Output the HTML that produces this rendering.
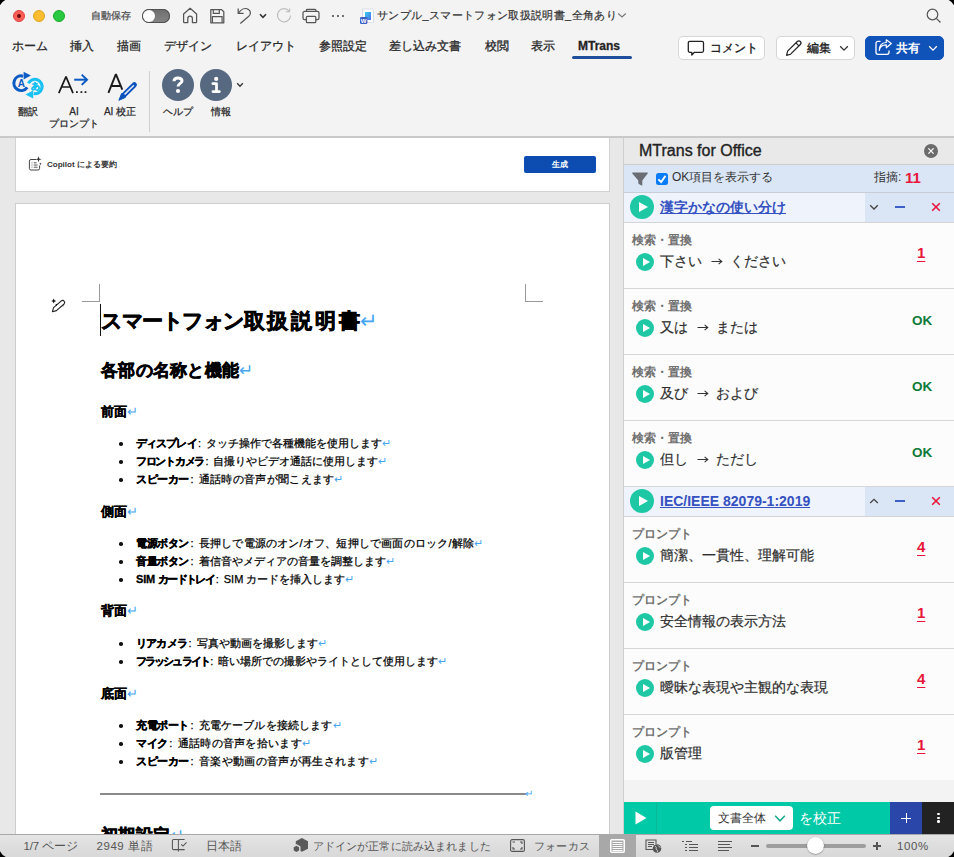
<!DOCTYPE html>
<html lang="ja"><head><meta charset="utf-8">
<style>
*{box-sizing:border-box;margin:0;padding:0}
html,body{width:954px;height:857px;overflow:hidden;background:#f3f3f3;font-family:"Liberation Sans",sans-serif;color:#222}
.a{position:absolute;white-space:nowrap}
#top{position:absolute;left:0;top:0;width:954px;height:138px;background:#f3f3f3;border-bottom:2px solid #c9c9c9;z-index:1}
.tl{position:absolute;width:12px;height:12px;border-radius:50%}
.tab{position:absolute;top:38px;font-size:12px;color:#2a2a2a;line-height:16px;-webkit-text-stroke:0.3px #2a2a2a}
.btn{position:absolute;top:36px;height:24px;border:1px solid #d6d6d6;border-radius:5px;background:#fff}
.rl{position:absolute;font-size:10px;color:#2a2a2a;line-height:12px;text-align:center;-webkit-text-stroke:0.25px #2a2a2a}
#docarea{position:absolute;left:0;top:137px;width:623px;height:697px;background:#e8e8e8;overflow:hidden}
#card{position:absolute;left:15px;top:1px;width:595px;height:54px;background:#fff;border:1px solid #d2d2d2;border-top:none}
#page{position:absolute;left:15px;top:66px;width:595px;height:700px;background:#fff;border:1px solid #cdcdcd}
.d{position:absolute;white-space:nowrap;color:#111}
.ret{color:#46a6f2;font-weight:normal;-webkit-text-stroke:0}
#panel{position:absolute;left:623px;top:137px;width:331px;height:697px;background:#f3f3f3;border-left:1px solid #cfcfcf}
#status{position:absolute;left:0;top:834px;width:954px;height:23px;background:linear-gradient(#e4e4e4,#d8d8d8);border-top:1px solid #a9a9a9}
#status .a{z-index:2}
.st{top:838px;font-size:11.5px;line-height:16px;color:#555}
.h3{font-size:12.5px;line-height:14px;font-weight:bold;color:#000;-webkit-text-stroke:0.3px #000}
.li{position:absolute;left:136px;white-space:nowrap;font-size:11px;line-height:14px;color:#000;-webkit-text-stroke:0.25px #000}
.li:before{content:"";position:absolute;left:-17px;top:6px;width:3.5px;height:3.5px;border-radius:50%;background:#111}
.li b{font-weight:bold;letter-spacing:-0.4px;-webkit-text-stroke:0.3px #000}
.li i{font-style:normal;padding:0 5px 0 1.5px}
.item{position:absolute;left:624px;width:330px;height:66px;background:#fcfcfc;border-bottom:1px solid #d6d6d6}
.cat{position:absolute;left:632px;font-size:12px;line-height:14px;color:#707070;font-weight:bold;white-space:nowrap}
.itx{position:absolute;left:660px;font-size:14px;line-height:20px;color:#2e2e2e;white-space:nowrap;-webkit-text-stroke:0.2px #2e2e2e}
.num{position:absolute;left:917px;font-size:15px;line-height:18px;color:#e8173a;font-weight:bold;text-decoration:underline;text-underline-offset:2.5px;margin-top:-1px}
.okm{position:absolute;left:912px;font-size:13.5px;line-height:16px;color:#0e7a3a;font-weight:bold;margin-top:-1px}
.ply{position:absolute;width:24px;height:24px;border-radius:50%;background:#1ec8a5}
.ply:after{content:"";position:absolute;left:9px;top:6.5px;border-left:9px solid #fff;border-top:5.5px solid transparent;border-bottom:5.5px solid transparent}
.ply.s{width:18px;height:18px}
.ply.s:after{left:6.5px;top:4.5px;border-left:7px solid #fff;border-top:4.5px solid transparent;border-bottom:4.5px solid transparent}
.lnk{font-size:14px;line-height:18px;color:#3550c0;font-weight:bold;text-decoration:underline}
</style></head><body>
<div id="top">
  <div class="tl" style="left:13px;top:10px;background:#fe5f57;border:0.5px solid #e0443e"><div style="position:absolute;left:3px;top:2.6px;width:4.2px;height:4.2px;border-radius:50%;background:#6b0a0a"></div></div>
  <div class="tl" style="left:33px;top:10px;background:#febc2e;border:0.5px solid #e1a325"></div>
  <div class="tl" style="left:53px;top:10px;background:#28c840;border:0.5px solid #1aab29"></div>
  <div class="a" style="left:91px;top:9px;font-size:10.4px;letter-spacing:0.15px;color:#555;line-height:14px;-webkit-text-stroke:0.3px #555">自動保存</div>
  <div class="a" style="left:142px;top:9px;width:28px;height:14px;border-radius:7px;background:linear-gradient(#6e6e6e,#858585);box-shadow:inset 0 0 0 1px #505050"><div style="position:absolute;left:1px;top:1px;width:12px;height:12px;border-radius:50%;background:#fff"></div></div>
  <div class="a" style="left:377px;top:8px;font-size:11px;letter-spacing:0.35px;color:#333;line-height:15px;-webkit-text-stroke:0.2px #333">サンプル_スマートフォン取扱説明書_全角あり</div>


  <svg class="a" style="left:180px;top:5px" width="20" height="20" viewBox="0 0 20 20"><path d="M3.6 17.1 V9 L10.1 3.3 L16.6 9 V17.1 Q16.6 17.5 16.2 17.5 H12.4 V13.5 A2.3 2.3 0 0 0 7.8 13.5 V17.5 H4 Q3.6 17.5 3.6 17.1 Z" fill="none" stroke="#555" stroke-width="1.25" stroke-linejoin="round"/></svg>
  <svg class="a" style="left:208px;top:7px" width="18" height="18" viewBox="0 0 18 18"><path d="M2.8 2.6 H13.6 L15.8 4.8 V15.8 H2.8 Z" fill="none" stroke="#555" stroke-width="1.25" stroke-linejoin="round"/><path d="M5.3 2.6 V6.3 H11.3 V2.6 M4.4 15.8 V9.6 H14.1 V15.8" fill="none" stroke="#555" stroke-width="1.2"/></svg>
  <svg class="a" style="left:236px;top:7px" width="18" height="18" viewBox="0 0 18 18"><path d="M2.2 1.4 V6.4 H7.6" fill="none" stroke="#555" stroke-width="1.25"/><path d="M2.4 6.2 C5 2.5 9 0.3 12.5 2.5 C15.5 4.5 14.5 8 12.5 9.6 L4.3 16.6" fill="none" stroke="#555" stroke-width="1.25"/></svg>
  <svg class="a" style="left:259px;top:13px" width="8" height="6" viewBox="0 0 8 6"><path d="M1 1.2 L4 4.3 L7 1.2" fill="none" stroke="#333" stroke-width="1.6"/></svg>
  <svg class="a" style="left:276px;top:7px" width="17" height="17" viewBox="0 0 17 17"><path d="M13.3 4.3 A6.6 6.6 0 1 0 14.6 8.5" fill="none" stroke="#bdbdbd" stroke-width="1.1"/><path d="M9.8 4.8 H13.6 V1.6" fill="none" stroke="#bdbdbd" stroke-width="1.1"/></svg>
  <svg class="a" style="left:302px;top:8px" width="18" height="16" viewBox="0 0 18 16"><path d="M4.5 3.4 V2.2 A0.9 0.9 0 0 1 5.4 1.3 H13 A0.9 0.9 0 0 1 13.9 2.2 V3.4" fill="none" stroke="#555" stroke-width="1.25"/><path d="M4.3 11.6 H2.6 A1.6 1.6 0 0 1 1 10 V5 A1.6 1.6 0 0 1 2.6 3.4 H15.4 A1.6 1.6 0 0 1 17 5 V10 A1.6 1.6 0 0 1 15.4 11.6 H13.7" fill="none" stroke="#555" stroke-width="1.25"/><rect x="4.4" y="8.3" width="9.4" height="6.4" rx="1" fill="#f3f3f3" stroke="#555" stroke-width="1.25"/></svg>
  <div class="a" style="left:331.6px;top:14.8px;width:2.4px;height:2.4px;border-radius:50%;background:#444"></div>
  <div class="a" style="left:336.9px;top:14.8px;width:2.4px;height:2.4px;border-radius:50%;background:#444"></div>
  <div class="a" style="left:341.9px;top:14.8px;width:2.4px;height:2.4px;border-radius:50%;background:#444"></div>
  <svg class="a" style="left:359px;top:8px" width="16" height="17" viewBox="0 0 16 17"><defs><linearGradient id="wg" x1="0" y1="0" x2="1" y2="1"><stop offset="0" stop-color="#35d0f5"/><stop offset="1" stop-color="#4a6fe0"/></linearGradient></defs><path d="M3.5 1 H12.5 A1.5 1.5 0 0 1 14.5 2.5 V14.5 A0.9 0.9 0 0 1 13.6 14.4 H3.5 Z" fill="#fff" stroke="#cfd6e0" stroke-width="0.8"/><rect x="6" y="4" width="6" height="8" fill="url(#wg)"/><rect x="1" y="9" width="7.4" height="7" rx="1.3" fill="#3b62c7"/><text x="4.7" y="14.6" font-size="6" font-weight="bold" fill="#fff" text-anchor="middle" font-family="Liberation Sans">W</text></svg>
  <svg class="a" style="left:617px;top:12px" width="10" height="7" viewBox="0 0 10 7"><path d="M1.2 1.5 L5 5 L8.8 1.5" fill="none" stroke="#777" stroke-width="1.1"/></svg>
  <svg class="a" style="left:925px;top:7px" width="18" height="18" viewBox="0 0 18 18"><circle cx="7.5" cy="7.5" r="5.3" fill="none" stroke="#555" stroke-width="1.2"/><path d="M11.3 11.3 L15.5 15.5" stroke="#555" stroke-width="1.2"/></svg>
  <svg class="a" style="left:0;top:0" width="7" height="7" viewBox="0 0 7 7"><path d="M0 0 H5.3 Q1.8 1.8 0 5.3 Z" fill="#000"/></svg>
  <svg class="a" style="left:947px;top:0" width="7" height="7" viewBox="0 0 7 7"><path d="M7 0 H1.7 Q5.2 1.8 7 5.3 Z" fill="#000"/></svg>

  <div class="tab" style="left:12px">ホーム</div>
  <div class="tab" style="left:70px">挿入</div>
  <div class="tab" style="left:117px">描画</div>
  <div class="tab" style="left:164px">デザイン</div>
  <div class="tab" style="left:236px">レイアウト</div>
  <div class="tab" style="left:319px">参照設定</div>
  <div class="tab" style="left:389px">差し込み文書</div>
  <div class="tab" style="left:485px">校閲</div>
  <div class="tab" style="left:531px">表示</div>
  <div class="tab" style="left:578px;font-weight:bold;color:#222">MTrans</div>
  <div class="a" style="left:572px;top:56px;width:60px;height:3px;border-radius:2px;background:#1f4e9c"></div>

  <div class="btn" style="left:678px;width:87px"><span class="a" style="left:31px;top:4px;font-size:12px;line-height:14px;color:#1a1a1a;-webkit-text-stroke:0.35px #1a1a1a">コメント</span></div>
  <div class="btn" style="left:776px;width:79px"><span class="a" style="left:30px;top:4px;font-size:12px;line-height:14px;color:#1a1a1a;-webkit-text-stroke:0.3px #1a1a1a">編集</span></div>
  <div class="btn" style="left:865px;width:79px;background:#0f52b8;border-color:#0f52b8"><span class="a" style="left:30px;top:4px;font-size:12px;line-height:14px;color:#fff;font-weight:bold">共有</span></div>


  <svg class="a" style="left:686px;top:39px" width="20" height="18" viewBox="0 0 20 18"><path d="M3.8 2.3 H16 A1.5 1.5 0 0 1 17.5 3.8 V11.8 A1.5 1.5 0 0 1 16 13.3 H8.5 L5.8 16 V13.3 H3.8 A1.5 1.5 0 0 1 2.3 11.8 V3.8 A1.5 1.5 0 0 1 3.8 2.3 Z" fill="none" stroke="#222" stroke-width="1.3" stroke-linejoin="round"/></svg>
  <svg class="a" style="left:785px;top:39px" width="18" height="18" viewBox="0 0 18 18"><path d="M1.6 16.4 L2.6 12.2 L12.3 2.5 A1.9 1.9 0 0 1 15.3 5.5 L5.6 15.2 Z M11 3.9 L13.9 6.8" fill="none" stroke="#222" stroke-width="1.2" stroke-linejoin="round"/></svg>
  <svg class="a" style="left:839px;top:45px" width="10" height="7" viewBox="0 0 10 7"><path d="M1.2 1.3 L5 5.1 L8.8 1.3" fill="none" stroke="#333" stroke-width="1.3"/></svg>
  <svg class="a" style="left:874px;top:39px" width="19" height="17" viewBox="0 0 19 17"><path d="M6.5 2.3 H4 A2 2 0 0 0 2 4.3 V13.3 A2 2 0 0 0 4 15.3 H13 A2 2 0 0 0 15 13.3 V11.5" fill="none" stroke="#fff" stroke-width="1.3"/><path d="M5.3 11.3 C5.8 7.5 8.5 5.8 12.3 5.8 V8.8 L17.3 4.5 L12.3 0.8 V3.5 C8 3.8 5.3 6.8 5.3 11.3 Z" fill="none" stroke="#fff" stroke-width="1.2" stroke-linejoin="round"/></svg>
  <svg class="a" style="left:928px;top:45px" width="10" height="7" viewBox="0 0 10 7"><path d="M1.2 1.3 L5 5.1 L8.8 1.3" fill="none" stroke="#fff" stroke-width="1.3"/></svg>

  <div class="rl" style="left:8px;top:106px;width:40px">翻訳</div>
  <div class="rl" style="left:44px;top:106px;width:60px">AI<br>プロンプト</div>
  <div class="rl" style="left:100px;top:106px;width:40px">AI 校正</div>
  <div class="a" style="left:149px;top:71px;width:1px;height:61px;background:#cfcfcf"></div>

  <svg class="a" style="left:8px;top:68px" width="42" height="34" viewBox="0 0 42 34">
    <path d="M15.09 8.15 A7.3 7.3 0 1 0 19.18 19.39" fill="none" stroke="#0a5bc4" stroke-width="3.1"/>
    <path d="M15.6 3.8 L22.9 7.6 L15.6 11.4 Z" fill="#0a5bc4"/>
    <path d="M20.37 15.46 A7.2 7.2 0 1 1 25.65 25.59" fill="none" stroke="#18c1f1" stroke-width="3.1"/>
    <path d="M25.2 22.4 L17.4 26.6 L25.2 30.6 Z" fill="#18c1f1"/>
    <text x="13.3" y="18.8" font-size="10" font-weight="bold" fill="#0a5bc4" text-anchor="middle" font-family="Liberation Sans">A</text>
    <text x="27.2" y="20.8" font-size="8.5" font-weight="bold" fill="#18c1f1" stroke="#18c1f1" stroke-width="0.5" text-anchor="middle">あ</text>
  </svg>
  <svg class="a" style="left:56px;top:72px" width="36" height="24" viewBox="0 0 36 24">
    <path d="M2.8 21.2 L10 4.6 L17 21.2 M5.4 15 H14.5" fill="none" stroke="#1a1a1a" stroke-width="1.7" stroke-linejoin="bevel"/>
    <rect x="20" y="19.2" width="1.8" height="1.8" fill="#222"/><rect x="24.5" y="19.2" width="1.8" height="1.8" fill="#222"/><rect x="28.6" y="19.2" width="1.8" height="1.8" fill="#222"/>
    <path d="M18.2 7.7 H31" fill="none" stroke="#0a5bc4" stroke-width="2"/>
    <path d="M25.7 2.6 L31 7.7 L25.7 12.9" fill="none" stroke="#0a5bc4" stroke-width="2"/>
  </svg>
  <svg class="a" style="left:104px;top:70px" width="36" height="34" viewBox="0 0 36 34">
    <path d="M4.4 22.8 L11.9 4.2 L18.3 19.6 M7.4 16 H16" fill="none" stroke="#1a1a1a" stroke-width="1.9" stroke-linejoin="bevel"/>
    <path d="M30.3 14.8 L19.6 25.3" fill="none" stroke="#0a52bd" stroke-width="5.2" stroke-linecap="round"/>
    <path d="M29.9 15.2 L20.6 24.4" fill="none" stroke="#e2e8f3" stroke-width="1.5"/>
    <path d="M17.6 23.6 L21.4 27.4 L14.9 30.3 Z" fill="#0a52bd" stroke="#0a52bd" stroke-width="1" stroke-linejoin="round"/>
  </svg>
  <svg class="a" style="left:162px;top:69px" width="32" height="32" viewBox="0 0 32 32">
    <circle cx="16" cy="16" r="16" fill="#566981"/>
    <path d="M12 12.2 C12 10 13.7 8.9 16 8.9 C18.4 8.9 20 10.2 20 12 C20 14.2 16 14.6 16 17.4" fill="none" stroke="#fff" stroke-width="3"/>
    <circle cx="16" cy="22" r="2.1" fill="#fff"/>
  </svg>
  <svg class="a" style="left:200px;top:69px" width="32" height="32" viewBox="0 0 32 32">
    <circle cx="16" cy="16" r="16" fill="#566981"/>
    <circle cx="16.2" cy="9.9" r="2.1" fill="#fff"/>
    <path d="M12.8 14.6 H16.5 V22.3 M12.9 22.6 H19.4" fill="none" stroke="#fff" stroke-width="2.7" stroke-linejoin="round" stroke-linecap="round"/>
  </svg>
  <svg class="a" style="left:236px;top:82px" width="8" height="6" viewBox="0 0 8 6"><path d="M1.2 1.2 L4 4.2 L6.8 1.2" fill="none" stroke="#333" stroke-width="1.3"/></svg>

  <div class="rl" style="left:158px;top:106px;width:40px">ヘルプ</div>
  <div class="rl" style="left:201px;top:106px;width:40px">情報</div>
</div>

<div id="docarea">
  <div id="card">
    <svg class="a" style="left:12px;top:18px" width="14" height="15" viewBox="0 0 14 15"><path d="M8 3.5 H3 A1.6 1.6 0 0 0 1.4 5.1 V12.4 A1.6 1.6 0 0 0 3 14 H10 A1.6 1.6 0 0 0 11.6 12.4 V9.5" fill="none" stroke="#444" stroke-width="1"/><path d="M3.6 6.8 H4.4 M3.6 9 H4.4 M3.6 11.2 H4.4 M5.8 6.8 H8.6 M5.8 9 H9.6 M5.8 11.2 H9.6" stroke="#444" stroke-width="0.9"/><path d="M10.5 0.3 L11.2 2.6 L13.5 3.3 L11.2 4 L10.5 6.3 L9.8 4 L7.5 3.3 L9.8 2.6 Z" fill="#333"/><path d="M12.4 6.4 L12.8 7.4 L13.8 7.8 L12.8 8.2 L12.4 9.2 L12 8.2 L11 7.8 L12 7.4 Z" fill="#333"/></svg>
    <div class="a" style="left:31px;top:20.5px;font-size:8px;line-height:12px;font-weight:bold;color:#333">Copilot による要約</div>
    <div class="a" style="left:508px;top:18px;width:72px;height:17px;background:#0d4db2;border-radius:2px;color:#fff;font-size:8px;font-weight:bold;text-align:center;line-height:17px">生成</div>
  </div>
  <div id="page">
  </div>
</div>


<div id="doc">
  <svg class="a" style="left:46px;top:292px" width="24" height="24" viewBox="0 0 24 24"><path d="M7.7 6.4 L8.5 8.2 L10.2 9 L8.5 9.8 L7.7 11.5 L6.9 9.8 L5.2 9 L6.9 8.2 Z" fill="#111"/><path d="M6.4 19.7 L7.6 15.6 L15.3 8.9 A2.1 2.1 0 0 1 18.1 12 L10.4 18.6 Z" fill="none" stroke="#222" stroke-width="1.1" stroke-linejoin="round"/><path d="M9.4 12.3 L11.4 11.8 L10.8 14 Z" fill="#111"/><path d="M16.4 13.6 L17.8 13.4 L17 14.8 Z" fill="#333"/></svg>
  <div class="a" style="left:82px;top:301px;width:18px;height:1px;background:#999"></div>
  <div class="a" style="left:99px;top:284px;width:1px;height:18px;background:#999"></div>
  <div class="a" style="left:525px;top:301px;width:18px;height:1px;background:#999"></div>
  <div class="a" style="left:525px;top:284px;width:1px;height:18px;background:#999"></div>
  <div class="a" style="left:100px;top:304px;width:1px;height:32px;background:#111"></div>
  <div class="d" style="left:101px;top:308px;font-size:21.4px;line-height:26px;font-weight:bold;color:#000;-webkit-text-stroke:0.7px #000"><span style="letter-spacing:-1.5px">スマートフォン</span><span style="letter-spacing:2.75px">取扱説明</span>書<span class="ret">↵</span></div>
  <div class="d" style="left:101px;top:360px;font-size:17.4px;line-height:20px;font-weight:bold;letter-spacing:0.25px;color:#000;-webkit-text-stroke:0.6px #000">各部の名称と機能<span class="ret">↵</span></div>
  <div class="d h3" style="left:101px;top:405px">前面<span class="ret">↵</span></div>
  <div class="li" style="top:436px"><b style="letter-spacing:-0.9px">ディスプレイ</b><i>:</i>タッチ操作で各種機能を使用します<span class="ret">↵</span></div>
  <div class="li" style="top:454px"><b style="letter-spacing:-1.3px">フロントカメラ</b><i>:</i>自撮りやビデオ通話に使用します<span class="ret">↵</span></div>
  <div class="li" style="letter-spacing:0.3px;top:472px"><b>スピーカー</b><i>:</i>通話時の音声が聞こえます<span class="ret">↵</span></div>
  <div class="d h3" style="left:101px;top:505px">側面<span class="ret">↵</span></div>
  <div class="li" style="letter-spacing:0.2px;top:536px"><b>電源ボタン</b><i>:</i>長押しで電源のオン/オフ、短押しで画面のロック/解除<span class="ret">↵</span></div>
  <div class="li" style="top:554px"><b>音量ボタン</b><i>:</i>着信音やメディアの音量を調整します<span class="ret">↵</span></div>
  <div class="li" style="top:572px"><b style="letter-spacing:-0.2px">SIM&nbsp;</b><b style="letter-spacing:-1.6px">カードトレイ</b><i>:</i>SIM カードを挿入します<span class="ret">↵</span></div>
  <div class="d h3" style="left:101px;top:604px">背面<span class="ret">↵</span></div>
  <div class="li" style="top:636px"><b style="letter-spacing:-0.8px">リアカメラ</b><i>:</i>写真や動画を撮影します<span class="ret">↵</span></div>
  <div class="li" style="top:654px"><b style="letter-spacing:-1.9px">フラッシュライト</b><i>:</i>暗い場所での撮影やライトとして使用します<span class="ret">↵</span></div>
  <div class="d h3" style="left:101px;top:687px">底面<span class="ret">↵</span></div>
  <div class="li" style="letter-spacing:0.15px;top:718px"><b>充電ポート</b><i>:</i>充電ケーブルを接続します<span class="ret">↵</span></div>
  <div class="li" style="letter-spacing:0.3px;top:736px"><b>マイク</b><i>:</i>通話時の音声を拾います<span class="ret">↵</span></div>
  <div class="li" style="letter-spacing:0.35px;top:754px"><b>スピーカー</b><i>:</i>音楽や動画の音声が再生されます<span class="ret">↵</span></div>
  <div class="a" style="left:100px;top:793px;width:426px;height:1.5px;background:#8a8a8a"></div>
  <div class="d" style="left:525px;top:788px;font-size:10px;line-height:12px"><span class="ret">↵</span></div>
  <div class="d" style="left:101px;top:825px;font-size:17.4px;line-height:20px;font-weight:bold;letter-spacing:0.25px;color:#000;-webkit-text-stroke:0.6px #000">初期設定<span class="ret">↵</span></div>
</div>

<div id="panel"></div>
<div class="a" style="left:624px;top:137px;width:330px;height:28px;background:#e9e9e9;border-bottom:1px solid #cdcdcd"></div>
<div class="a" style="left:639px;top:141px;font-size:16px;line-height:20px;color:#222;-webkit-text-stroke:0.35px #222">MTrans for Office</div>
<svg class="a" style="left:924px;top:144px" width="14" height="14" viewBox="0 0 14 14"><circle cx="7" cy="7" r="7" fill="#6b6b6b"/><path d="M4.4 4.4 L9.6 9.6 M9.6 4.4 L4.4 9.6" stroke="#fff" stroke-width="1.3"/></svg>
<div class="a" style="left:624px;top:165px;width:330px;height:28px;background:#dae5f5;border-bottom:1px solid #c9ced6"></div>
<svg class="a" style="left:631px;top:171px" width="18" height="15" viewBox="0 0 18 15"><path d="M1.8 1.4 H16.2 Q17.3 1.4 16.7 2.4 L11.3 9.4 V14 Q11.3 14.8 10.5 14.4 L7.9 12.9 Q7.3 12.5 7.3 11.9 V9.4 L1.3 2.4 Q0.7 1.4 1.8 1.4 Z" fill="#6a6d74"/></svg>
<svg class="a" style="left:656px;top:173px" width="12" height="12" viewBox="0 0 12 12"><rect width="12" height="12" rx="2.5" fill="#0b7cf8"/><path d="M2.4 6.3 L5.1 9 L9.5 2.9" fill="none" stroke="#fff" stroke-width="1.8"/></svg>
<div class="a" style="left:672px;top:169px;font-size:12px;line-height:16px;color:#333">OK項目を表示する</div>
<div class="a" style="left:874px;top:169px;font-size:12px;line-height:16px;color:#333">指摘:</div>
<div class="a" style="left:905px;top:170px;font-size:15px;line-height:16px;color:#e8173a;font-weight:bold">11</div>
<div class="a" style="left:624px;top:193px;width:330px;height:30px;background:#eef3fc;border-bottom:1px solid #d4d4d4"></div>
<div class="a" style="left:865px;top:193px;width:89px;height:29px;background:#dae5f5"></div>
<div class="ply" style="left:630px;top:195px"></div>
<div class="a lnk" style="left:660px;top:198px">漢字かなの使い分け</div>
<svg class="a" style="left:869px;top:204px" width="10" height="7" viewBox="0 0 10 7"><path d="M1.2 1.3 L5 5 L8.8 1.3" fill="none" stroke="#444" stroke-width="1.3"/></svg>
<div class="a" style="left:895px;top:206px;width:10px;height:2px;background:#3d5fc9"></div>
<svg class="a" style="left:931px;top:202px" width="10" height="10" viewBox="0 0 10 10"><path d="M1.2 1.2 L8.8 8.8 M8.8 1.2 L1.2 8.8" stroke="#e8173a" stroke-width="1.6"/></svg>
<div class="item" style="top:223px;height:66px;"></div>
<div class="cat" style="top:233px">検索・置換</div>
<div class="ply s" style="left:636px;top:253px"></div>
<div class="itx" style="top:251px">下さい<svg style="margin:0 7px 0 9px;vertical-align:0.5px" width="12" height="9" viewBox="0 0 12 9"><path d="M0.5 4.5 H10.8 M7.6 1.8 L10.8 4.5 L7.6 7.2" fill="none" stroke="#333" stroke-width="1.1"/></svg>ください</div>
<div class="num" style="top:245px">1</div>
<div class="item" style="top:289px;height:66px;"></div>
<div class="cat" style="top:299px">検索・置換</div>
<div class="ply s" style="left:636px;top:319px"></div>
<div class="itx" style="top:317px">又は<svg style="margin:0 7px 0 9px;vertical-align:0.5px" width="12" height="9" viewBox="0 0 12 9"><path d="M0.5 4.5 H10.8 M7.6 1.8 L10.8 4.5 L7.6 7.2" fill="none" stroke="#333" stroke-width="1.1"/></svg>または</div>
<div class="okm" style="top:314px">OK</div>
<div class="item" style="top:355px;height:66px;"></div>
<div class="cat" style="top:365px">検索・置換</div>
<div class="ply s" style="left:636px;top:385px"></div>
<div class="itx" style="top:383px">及び<svg style="margin:0 7px 0 9px;vertical-align:0.5px" width="12" height="9" viewBox="0 0 12 9"><path d="M0.5 4.5 H10.8 M7.6 1.8 L10.8 4.5 L7.6 7.2" fill="none" stroke="#333" stroke-width="1.1"/></svg>および</div>
<div class="okm" style="top:380px">OK</div>
<div class="item" style="top:421px;height:66px;"></div>
<div class="cat" style="top:431px">検索・置換</div>
<div class="ply s" style="left:636px;top:451px"></div>
<div class="itx" style="top:449px">但し<svg style="margin:0 7px 0 9px;vertical-align:0.5px" width="12" height="9" viewBox="0 0 12 9"><path d="M0.5 4.5 H10.8 M7.6 1.8 L10.8 4.5 L7.6 7.2" fill="none" stroke="#333" stroke-width="1.1"/></svg>ただし</div>
<div class="okm" style="top:446px">OK</div>
<div class="a" style="left:624px;top:487px;width:330px;height:30px;background:#eef3fc;border-bottom:1px solid #d4d4d4"></div>
<div class="a" style="left:865px;top:487px;width:89px;height:29px;background:#dae5f5"></div>
<div class="ply" style="left:630px;top:489px"></div>
<div class="a lnk" style="left:660px;top:492px">IEC/IEEE 82079-1:2019</div>
<svg class="a" style="left:869px;top:498px" width="10" height="7" viewBox="0 0 10 7"><path d="M1.2 5 L5 1.3 L8.8 5" fill="none" stroke="#444" stroke-width="1.3"/></svg>
<div class="a" style="left:895px;top:500px;width:10px;height:2px;background:#3d5fc9"></div>
<svg class="a" style="left:931px;top:496px" width="10" height="10" viewBox="0 0 10 10"><path d="M1.2 1.2 L8.8 8.8 M8.8 1.2 L1.2 8.8" stroke="#e8173a" stroke-width="1.6"/></svg>
<div class="item" style="top:517px;height:66px;"></div>
<div class="cat" style="top:527px">プロンプト</div>
<div class="ply s" style="left:636px;top:547px"></div>
<div class="itx" style="top:545px">簡潔、一貫性、理解可能</div>
<div class="num" style="top:539px">4</div>
<div class="item" style="top:583px;height:66px;"></div>
<div class="cat" style="top:593px">プロンプト</div>
<div class="ply s" style="left:636px;top:613px"></div>
<div class="itx" style="top:611px">安全情報の表示方法</div>
<div class="num" style="top:605px">1</div>
<div class="item" style="top:649px;height:66px;"></div>
<div class="cat" style="top:659px">プロンプト</div>
<div class="ply s" style="left:636px;top:679px"></div>
<div class="itx" style="top:677px">曖昧な表現や主観的な表現</div>
<div class="num" style="top:671px">4</div>
<div class="item" style="top:715px;height:65px;border-bottom:none;"></div>
<div class="cat" style="top:725px">プロンプト</div>
<div class="ply s" style="left:636px;top:745px"></div>
<div class="itx" style="top:743px">版管理</div>
<div class="num" style="top:737px">1</div>
<div class="a" style="left:624px;top:802px;width:330px;height:32px;background:#00c9a7"></div>
<div class="a" style="left:656px;top:802px;width:1px;height:32px;background:#0bb898"></div>
<svg class="a" style="left:634px;top:810px" width="14" height="16" viewBox="0 0 14 16"><path d="M1.5 1.5 L12.5 8 L1.5 14.5 Z" fill="#fff"/></svg>
<div class="a" style="left:710px;top:806px;width:83px;height:24px;background:#fff;border-radius:4px"></div>
<div class="a" style="left:718px;top:809px;font-size:12.4px;line-height:18px;color:#333">文書全体</div>
<svg class="a" style="left:774px;top:814px" width="12" height="9" viewBox="0 0 12 9"><path d="M1.2 1.8 L6 6.8 L10.8 1.8" fill="none" stroke="#17a88b" stroke-width="1.5"/></svg>
<div class="a" style="left:799px;top:808px;font-size:14px;line-height:20px;color:#fff">を校正</div>
<div class="a" style="left:890px;top:802px;width:32px;height:32px;background:#2a46a8"></div>
<div class="a" style="left:922px;top:802px;width:32px;height:32px;background:#222"></div>
<div class="a" style="left:901.3px;top:817.5px;width:10px;height:1.6px;background:#fff"></div>
<div class="a" style="left:905.5px;top:813.3px;width:1.6px;height:10px;background:#fff"></div>
<div class="a" style="left:937.3px;top:813.1px;width:2.4px;height:2.4px;border-radius:50%;background:#fff"></div>
<div class="a" style="left:937.3px;top:816.7px;width:2.4px;height:2.4px;border-radius:50%;background:#fff"></div>
<div class="a" style="left:937.3px;top:820.4px;width:2.4px;height:2.4px;border-radius:50%;background:#fff"></div>
<div id="status"></div>
  <div class="a st" style="left:23.5px;letter-spacing:-0.15px">1/7 ページ</div>
  <div class="a st" style="left:96.5px;letter-spacing:0.55px">2949 単語</div>
  <svg class="a" style="left:170px;top:837px" width="18" height="16" viewBox="0 0 18 16"><path d="M8.4 2.4 H3.6 A1.2 1.2 0 0 0 2.4 3.6 V11.4 A1.2 1.2 0 0 0 3.6 12.6 H8.4 M8.4 14.6 V3.4 A1 1 0 0 1 9.4 2.4 H14.6 M8.4 12.6 H14.6" fill="none" stroke="#555" stroke-width="1.05"/><path d="M11.2 7.3 L13 9.1 L16.5 5.3" fill="none" stroke="#555" stroke-width="1.05"/></svg>
  <div class="a st" style="left:206px">日本語</div>
  <svg class="a" style="left:290px;top:836px" width="20" height="18" viewBox="0 0 20 18"><path d="M11.9 2 L18 5.3 V12.7 L11.9 15.8 L5.8 12.7 V5.3 Z" fill="#5a5a5a"/><path d="M6.4 8.9 L9.8 10.9 V14.9 L6.4 16.9 L3 14.9 V10.9 Z" fill="#5a5a5a" stroke="#dedede" stroke-width="1.4" stroke-linejoin="round"/></svg>
  <div class="a st" style="left:312.5px;font-size:11px;letter-spacing:0.15px">アドインが正常に読み込まれました</div>
  <svg class="a" style="left:510px;top:839px" width="15" height="13" viewBox="0 0 15 13"><rect x="0.6" y="0.6" width="13.8" height="11.8" rx="1.5" fill="none" stroke="#555" stroke-width="1.1"/><path d="M3 3.5 V3 H5 M10 3 H12 V5 M12 8 V10 H10 M5 10 H3 V8" fill="none" stroke="#555" stroke-width="1.1"/></svg>
  <div class="a st" style="left:533.5px;font-size:11px;letter-spacing:0.4px">フォーカス</div>
  <div class="a" style="left:599px;top:834px;width:37px;height:23px;background:#a8a8a8"></div>
  <svg class="a" style="left:609px;top:838px" width="17" height="16" viewBox="0 0 17 16"><rect x="1.75" y="1.75" width="13.5" height="12.5" rx="1" fill="none" stroke="#fff" stroke-width="1.5"/><path d="M3.5 4.5 H13.5 M3.5 6.5 H13.5 M3.5 8.5 H13.5 M3.5 10.5 H13.5 M3.5 12.5 H13.5" stroke="#fff" stroke-width="1"/></svg>
  <svg class="a" style="left:645px;top:839px" width="17" height="14" viewBox="0 0 17 14"><path d="M9 10.5 H1 V1 H11 V5" fill="none" stroke="#555" stroke-width="1.1"/><path d="M3 3.5 H9 M3 5.5 H9 M3 7.5 H7" stroke="#555" stroke-width="1"/><circle cx="12" cy="9.5" r="4.3" fill="#555"/><path d="M10 7 Q12 8 11 10 Q13 11 12.5 13 M13 6.5 Q14 8 15.5 8.5" fill="none" stroke="#ddd" stroke-width="0.8"/></svg>
  <svg class="a" style="left:682px;top:841px" width="16" height="11" viewBox="0 0 16 11"><path d="M0 0.5 H2 M4 0.5 H10 M3 3.5 H5 M7 3.5 H16 M3 6.5 H5 M7 6.5 H16 M3 9.5 H5 M7 9.5 H16" stroke="#555" stroke-width="1.1"/></svg>
  <svg class="a" style="left:718px;top:841px" width="15" height="11" viewBox="0 0 15 11"><path d="M0 0.5 H14 M0 3.5 H12 M0 6.5 H14 M0 9.5 H11" stroke="#555" stroke-width="1.1"/></svg>
  <div class="a" style="left:751px;top:845px;width:8px;height:2px;background:#555"></div>
  <div class="a" style="left:766px;top:844px;width:100px;height:4px;border-radius:2px;background:#9d9d9d"></div>
  <div class="a" style="left:807px;top:836.5px;width:17px;height:17px;border-radius:50%;background:#fff;box-shadow:0 0.5px 1.5px rgba(0,0,0,.45)"></div>
  <div class="a" style="left:873px;top:844.5px;width:8px;height:2px;background:#555"></div>
  <div class="a" style="left:876px;top:841.5px;width:2px;height:8px;background:#555"></div>
  <div class="a st" style="left:897px;letter-spacing:0.6px">100%</div>

<svg class="a" style="left:0;top:850px;z-index:3" width="7" height="7" viewBox="0 0 7 7"><path d="M0 7 H5.8 Q2 5.2 0 1.2 Z" fill="#000"/></svg>
<svg class="a" style="left:947px;top:850px;z-index:3" width="7" height="7" viewBox="0 0 7 7"><path d="M7 7 H1.2 Q5 5.2 7 1.2 Z" fill="#000"/></svg>
</body></html>
